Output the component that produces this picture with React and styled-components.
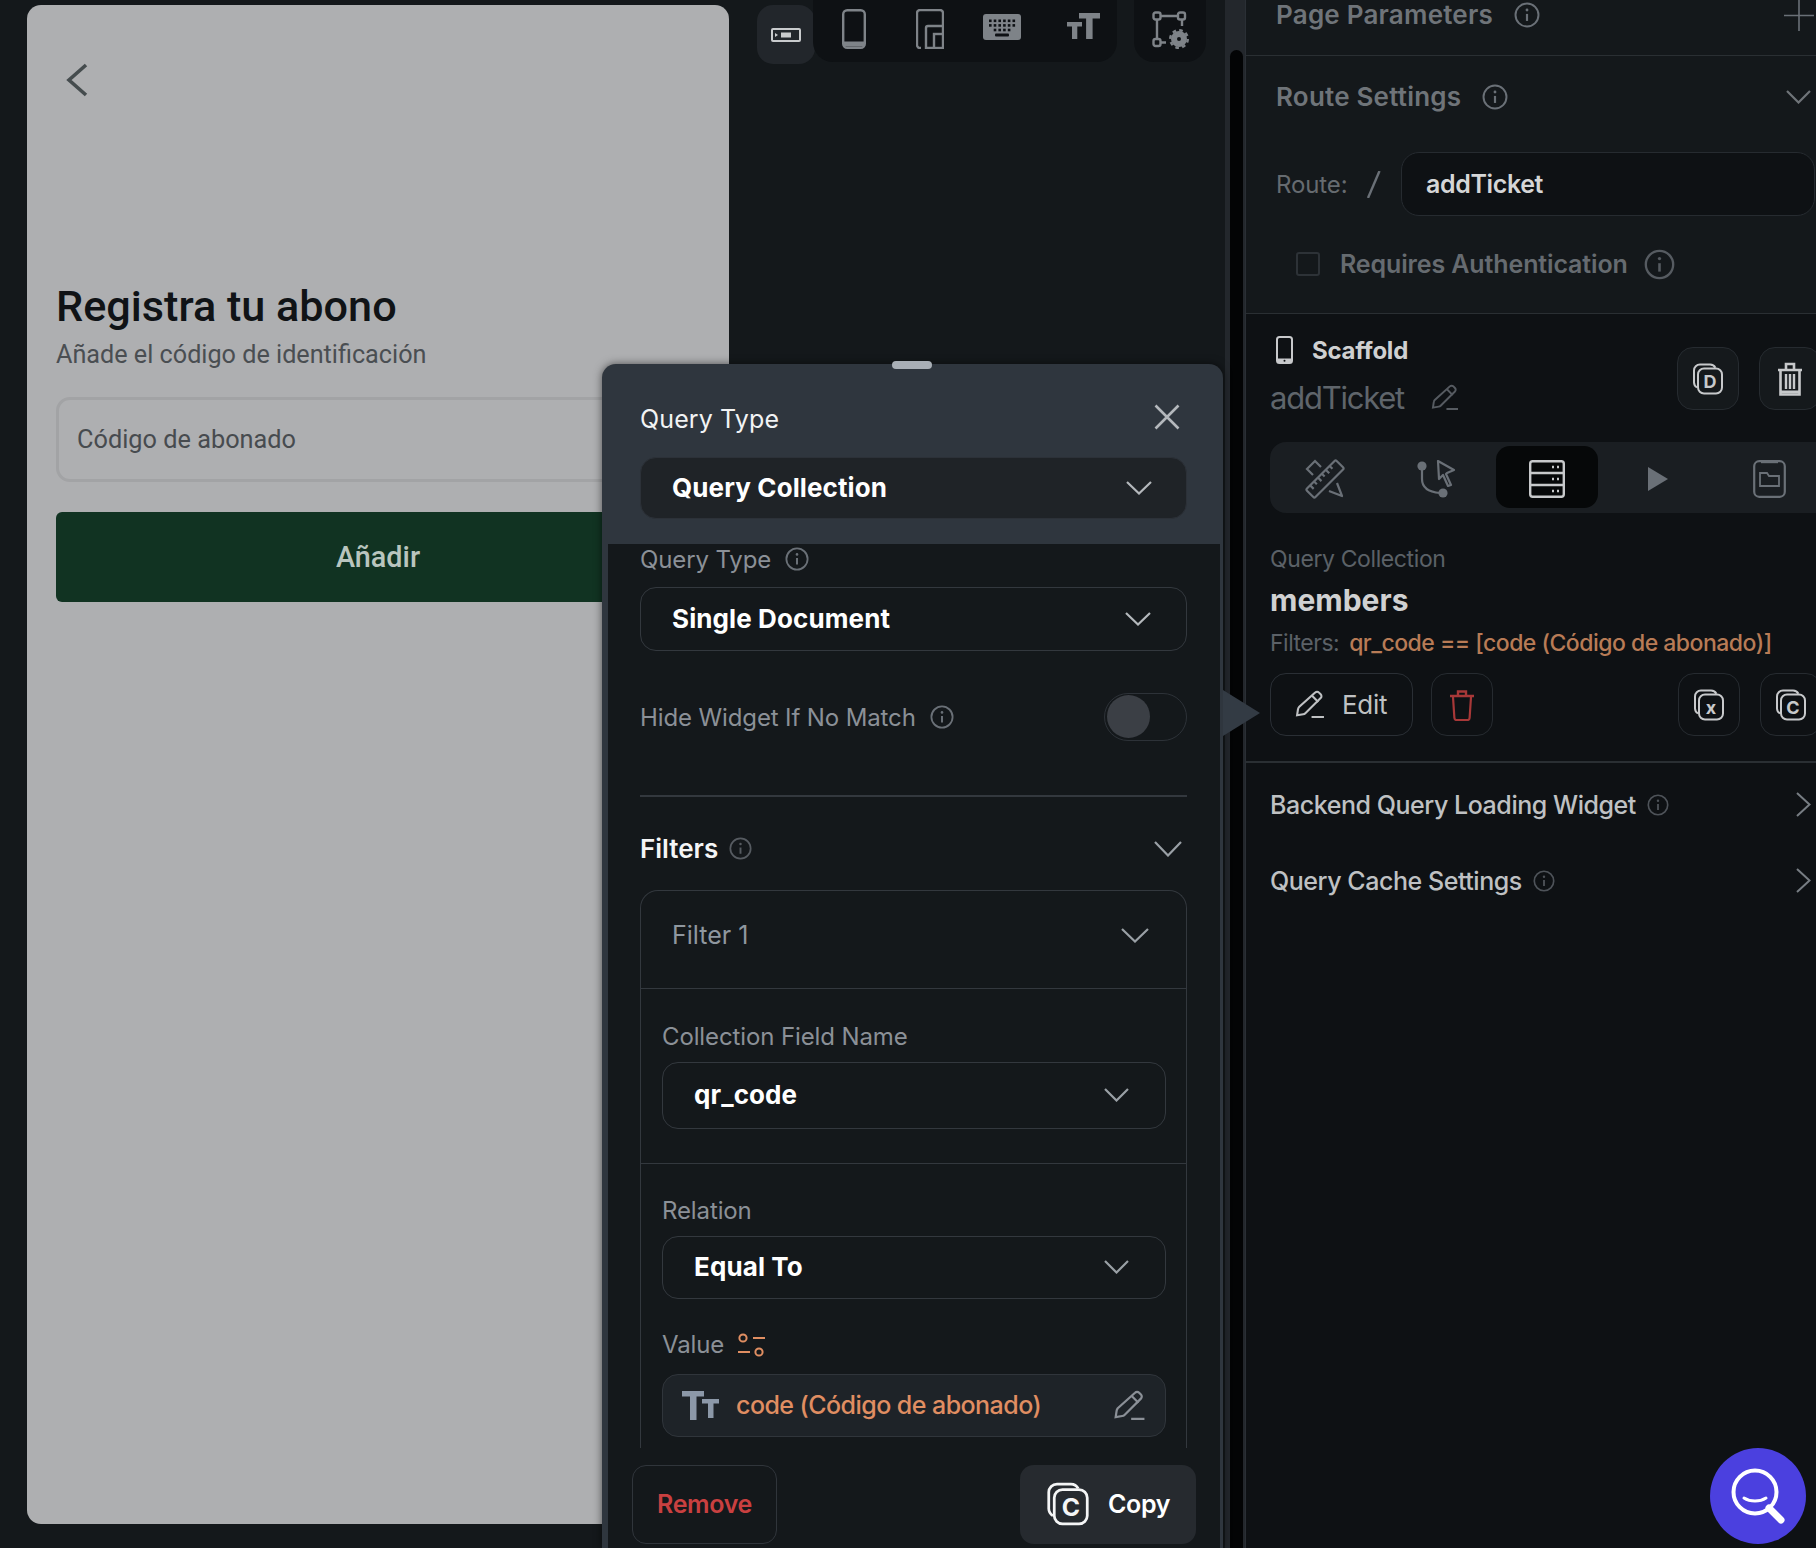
import React from 'react';
import styled, { createGlobalStyle } from 'styled-components';

const GlobalStyle = createGlobalStyle`
  html, body {
    margin: 0;
    width: 1816px;
    height: 1548px;
    overflow: hidden;
    background: #14181b;
    font-family: Inter, "Noto Sans", sans-serif;
  }
  * { box-sizing: border-box; }
`;

const Page = styled.div`
  position: relative;
  display: flex;
  width: 1816px;
  height: 1548px;
  overflow: hidden;
  background: #14181b;
`;

/* ---------- canvas with the phone preview ---------- */
const Canvas = styled.div`
  flex: 0 0 1225px;
  display: flex;
  align-items: flex-start;
  padding: 5px 0 0 27px;
`;

const PhoneCard = styled.div`
  flex: 0 0 702px;
  height: 1519px;
  border-radius: 14px;
  background: #aeafb1;
  padding: 58px 29px 0;
  font-family: Roboto, sans-serif;
  display: flex;
  flex-direction: column;
`;

const BackIcon = styled.svg`
  width: 22px;
  height: 34px;
  margin-left: 10px;
`;

const PhoneTitle = styled.div`
  margin-top: 186px;
  font-size: 43.2px;
  line-height: 48px;
  font-weight: 500;
  color: #101316;
`;

const PhoneSub = styled.div`
  margin-top: 7px;
  font-size: 25.2px;
  line-height: 34px;
  color: #4a4e52;
`;

const PhoneInput = styled.div`
  margin-top: 25px;
  height: 85px;
  border: 3.5px solid #a2a3a5;
  border-radius: 14px;
  padding-left: 18px;
  display: flex;
  align-items: center;
  font-size: 25.3px;
  color: #474b4f;
`;

const PhoneButton = styled.div`
  margin-top: 30px;
  height: 90px;
  border-radius: 6px;
  background: #113322;
  color: #b9c5be;
  font-size: 28.8px;
  font-weight: 500;
  display: flex;
  align-items: center;
  justify-content: center;
`;

const Toolbar = styled.div`
  display: flex;
  align-items: flex-start;
  margin: -5px 0 0 28px;
`;

const ActiveTool = styled.div`
  width: 58px;
  height: 59px;
  margin-top: 5px;
  border-radius: 16px;
  background: #22262b;
  display: flex;
  align-items: center;
  justify-content: center;
`;

const ToolGroup = styled.div`
  width: ${p => p.$width}px;
  height: 62px;
  margin-left: ${p => p.$offset || 0}px;
  padding-left: ${p => p.$pad}px;
  background: #0e1114;
  border-radius: 0 0 20px 20px;
  display: flex;
  align-items: center;
`;

const ToolIcon = styled.svg`
  flex: none;
  margin-left: ${p => p.$gap || 0}px;
  margin-top: ${p => p.$top || 0}px;
`;

const ScrollTrack = styled.div`
  flex: 0 0 20px;
  background: #23272c;
  padding: 50px 2px 0 5px;
`;

const ScrollThumb = styled.div`
  height: 100%;
  background: #030405;
  border-radius: 8px 8px 0 0;
`;

/* ---------- right properties panel ---------- */
const Panel = styled.div`
  flex: 1;
  min-width: 0;
  border-left: 1px solid #2a2f35;
  display: flex;
  flex-direction: column;
  overflow: hidden;
`;

const RouteSection = styled.section`
  padding: 0 1px 33px 30px;
  border-bottom: 1.5px solid #2a2f33;
`;

const ParamsWrap = styled.div`
  margin: 0 -1px 0 -30px;
  padding: 0 2px 25px 30px;
  border-bottom: 1.5px solid #2a2f33;
`;

const HeadRow = styled.div`
  display: flex;
  align-items: center;
  height: 30px;
  margin-top: ${p => p.$top || 0}px;
  padding-right: ${p => p.$right || 0}px;
`;

const DimHeading = styled.div`
  font-size: 26px;
  font-weight: 600;
  letter-spacing: 0.008em;
  line-height: 30px;
  color: #6f7479;
  margin-right: 21px;
`;

const Push = styled.div`
  flex: 1;
`;

const RouteRow = styled.div`
  display: flex;
  align-items: center;
  height: 64px;
  margin-top: 40px;
`;

const RouteLabel = styled.div`
  width: 90px;
  font-size: 24px;
  letter-spacing: -0.005em;
  color: #666b70;
`;

const RouteInput = styled.div`
  flex: 1;
  height: 64px;
  margin-left: 20px;
  padding-left: 24px;
  border: 1.5px solid #262b30;
  border-radius: 18px;
  background: #0e1114;
  color: #d5d6d7;
  font-size: 25px;
  font-weight: 600;
  letter-spacing: -0.015em;
  display: flex;
  align-items: center;
`;

const AuthRow = styled.div`
  display: flex;
  align-items: center;
  height: 32px;
  margin-top: 32px;
  padding-left: 20px;
`;

const Check = styled.div`
  width: 24px;
  height: 24px;
  border: 2px solid #2d3237;
  border-radius: 3px;
  margin-right: 20px;
`;

const AuthLabel = styled(DimHeading)`
  font-size: 25px;
  letter-spacing: -0.005em;
  color: #666b70;
  margin-right: 16px;
`;

const QuerySection = styled.section`
  flex: 1;
  background: #0e1114;
  padding: 22px 0 0 24px;
`;

const ScaffoldHead = styled.div`
  display: flex;
  justify-content: space-between;
  align-items: flex-start;
`;

const ScaffoldRow = styled.div`
  display: flex;
  align-items: center;
  height: 28px;
  padding-left: 6px;
  gap: 19px;
`;

const ScaffoldLabel = styled.div`
  font-size: 24px;
  font-weight: 700;
  letter-spacing: -0.01em;
  color: #cfd0d1;
`;

const NameRow = styled.div`
  display: flex;
  align-items: center;
  gap: 27px;
  height: 38px;
  margin-top: 14px;
`;

const PageName = styled.div`
  font-size: 31px;
  letter-spacing: -0.04em;
  color: #5f656b;
`;

const IconButtons = styled.div`
  display: flex;
  gap: 20px;
  flex: none;
  margin: ${p => p.$top || 0}px -5px 0 0;
`;

const SquareButton = styled.div`
  width: 62px;
  height: 63px;
  border: 1.5px solid #262b30;
  border-radius: 16px;
  background: ${p => p.$fill || 'transparent'};
  display: flex;
  align-items: center;
  justify-content: center;
`;

const TabBar = styled.div`
  display: flex;
  gap: 9px;
  width: 570px;
  height: 71px;
  margin-top: 26px;
  padding: 4px;
  border-radius: 16px;
  background: #1a1e22;
`;

const Tab = styled.div`
  width: 102px;
  height: 62px;
  padding-top: 4px;
  border-radius: 14px;
  background: ${p => (p.$active ? '#060809' : 'transparent')};
  display: flex;
  align-items: center;
  justify-content: center;
`;

const QueryKind = styled.div`
  margin-top: 31px;
  font-size: 23px;
  line-height: 30px;
  letter-spacing: -0.017em;
  color: #5b6167;
`;

const CollectionName = styled.div`
  margin-top: 8px;
  font-size: 30px;
  line-height: 36px;
  font-weight: 700;
  color: #d0d1d2;
`;

const FilterLine = styled.div`
  margin-top: 10px;
  display: flex;
  gap: 10px;
  font-size: 23px;
  line-height: 30px;
  letter-spacing: -0.022em;
  color: #5b6167;
`;

const FilterValue = styled.span`
  font-weight: 500;
  color: #b87b56;
`;

const ActionRow = styled.div`
  margin-top: 15px;
  padding-bottom: 25px;
  display: flex;
  align-items: flex-start;
`;

const EditButton = styled.div`
  width: 143px;
  height: 63px;
  border: 1.5px solid #2a2f35;
  border-radius: 16px;
  padding-left: 24px;
  display: flex;
  align-items: center;
  gap: 17px;
  font-size: 26px;
  letter-spacing: -0.01em;
  color: #bfc1c3;
`;

const DeleteSlot = styled.div`
  margin: 0 auto 0 18px;
`;

const SideButtons = styled(IconButtons)`
  margin-right: -6px;
`;

const QueryRule = styled.div`
  height: 1.5px;
  margin-left: -24px;
  background: #2a2f33;
`;

const Accordions = styled.div`
  margin-top: 4px;
  padding-right: 5px;
`;

const AccordionRow = styled.div`
  display: flex;
  align-items: center;
  height: 76px;
`;

const AccordionLabel = styled.div`
  font-size: 25px;
  font-weight: 500;
  letter-spacing: -0.018em;
  color: #bfc1c3;
  margin-right: 11px;
`;

const SearchFab = styled.div`
  position: absolute;
  left: 1710px;
  top: 1448px;
  width: 96px;
  height: 96px;
  border-radius: 50%;
  background: #4b40df;
  display: flex;
  align-items: center;
  justify-content: center;
`;

/* ---------- query popover over the canvas ---------- */
const Popover = styled.div`
  position: absolute;
  left: 602px;
  top: 364px;
  width: 621px;
  height: 1184px;
  border-radius: 14px 14px 0 0;
  background: #2f363e;
  box-shadow: 0 0 8px rgba(0, 0, 0, 0.55);
  display: flex;
  flex-direction: column;
`;

const Handle = styled.div`
  position: absolute;
  left: 290px;
  top: -3px;
  width: 40px;
  height: 8px;
  border-radius: 4px;
  background: #a9afb6;
`;

const PopArrow = styled.div`
  position: absolute;
  left: 621px;
  top: 326px;
  width: 0;
  height: 0;
  border-top: 23px solid transparent;
  border-bottom: 23px solid transparent;
  border-left: 37px solid #333b44;
`;

const PopHeader = styled.div`
  height: 180px;
  padding: 40px 36px 0 38px;
`;

const TitleRow = styled.div`
  display: flex;
  justify-content: space-between;
  align-items: center;
  height: 30px;
`;

const PopTitle = styled.div`
  font-size: 25px;
  letter-spacing: 0.005em;
  color: #f2f3f4;
`;

const SelectBox = styled.div`
  height: ${p => p.$h}px;
  margin-top: ${p => p.$top}px;
  padding: 0 ${p => p.$right || 28}px 0 ${p => p.$left || 27}px;
  border: 1.5px solid ${p => p.$line || '#33383e'};
  border-radius: 16px;
  background: ${p => p.$fill || 'transparent'};
  display: flex;
  align-items: center;
  justify-content: space-between;
  font-size: 26px;
  font-weight: 700;
  letter-spacing: 0.004em;
  color: #fff;
  line-height: 1;
  padding-bottom: 1px;
`;

const PopBody = styled.div`
  flex: 1;
  min-height: 0;
  margin: 0 3px 0 6px;
  background: #14181b;
  display: flex;
  flex-direction: column;
`;

const ScrollArea = styled.div`
  height: 904px;
  flex: none;
  overflow: hidden;
  padding: 0 33px 0 32px;
`;

const FieldLabel = styled.div`
  display: flex;
  align-items: center;
  gap: 14px;
  height: 30px;
  margin-top: ${p => p.$top || 0}px;
  font-size: 24px;
  letter-spacing: -0.005em;
  color: #8b9097;
`;

const ToggleRow = styled.div`
  display: flex;
  align-items: center;
  justify-content: space-between;
  height: 48px;
  margin-top: 42px;
`;

const Toggle = styled.div`
  width: 83px;
  height: 48px;
  padding: 1px 2px;
  border: 1.5px solid #2d3238;
  border-radius: 24px;
`;

const Knob = styled.div`
  width: 43px;
  height: 43px;
  border-radius: 50%;
  background: #3b3f45;
`;

const Rule = styled.div`
  height: 1.5px;
  margin-top: 54px;
  background: #33383e;
`;

const FiltersRow = styled.div`
  display: flex;
  align-items: center;
  height: 32px;
  margin-top: 36px;
  padding-right: 5px;
`;

const FiltersLabel = styled.div`
  font-size: 26px;
  font-weight: 600;
  color: #f4f5f6;
  margin-right: 11px;
`;

const FilterBox = styled.div`
  margin-top: 25px;
  border: 1.5px solid #33383e;
  border-bottom: none;
  border-radius: 18px 18px 0 0;
  height: 700px;
`;

const FilterHead = styled.div`
  height: 98px;
  padding: 0 37px 8px 31px;
  border-bottom: 1.5px solid #33383e;
  display: flex;
  align-items: center;
  justify-content: space-between;
  font-size: 25px;
  color: #8f979f;
`;

const FilterGroup = styled.div`
  padding: 0 20px ${p => p.$bottom || 0}px 21px;
  border-bottom: ${p => (p.$rule ? '1.5px solid #33383e' : 'none')};
`;

const ValueField = styled.div`
  height: 63px;
  margin-top: 14px;
  padding: 0 19px;
  border: 1.5px solid #30353b;
  border-radius: 16px;
  background: #1e2328;
  display: flex;
  align-items: center;
  font-size: 25px;
  font-weight: 500;
  letter-spacing: -0.022em;
  color: #e08e62;
`;

const ValueText = styled.div`
  flex: 1;
  margin-left: 17px;
`;

const PopFooter = styled.div`
  margin-top: 17px;
  padding: 0 24px;
  display: flex;
  justify-content: space-between;
`;

const RemoveButton = styled.div`
  width: 145px;
  height: 79px;
  padding-bottom: 2px;
  border: 1.5px solid #30353b;
  border-radius: 14px;
  display: flex;
  align-items: center;
  justify-content: center;
  font-size: 25px;
  font-weight: 600;
  letter-spacing: -0.015em;
  color: #c94040;
`;

const CopyButton = styled.div`
  width: 176px;
  height: 79px;
  border-radius: 14px;
  background: #262a2f;
  padding: 0 0 2px 26px;
  display: flex;
  align-items: center;
  gap: 18px;
  font-size: 25px;
  font-weight: 600;
  letter-spacing: -0.015em;
  color: #fff;
`;

/* ---------- drawn icons ---------- */
const Info = ({ size = 24, color = '#6a7077' }) => (
  <svg width={size} height={size} viewBox="0 0 24 24" fill="none" style={{ flex: 'none' }}>
    <circle cx="12" cy="12" r="10.6" stroke={color} strokeWidth="1.8" />
    <path d="M12 11v6.5" stroke={color} strokeWidth="2" />
    <circle cx="12" cy="7.4" r="1.3" fill={color} />
  </svg>
);

const Chevron = ({ w = 26, h = 14, color = '#9aa0a6', width = 2.2 }) => (
  <svg width={w} height={h} viewBox={`0 0 ${w} ${h}`} fill="none" style={{ flex: 'none' }}>
    <path d={`M1 1L${w / 2} ${h - 1.5}L${w - 1} 1`} stroke={color} strokeWidth={width} />
  </svg>
);

const ChevronRight = () => (
  <svg width="15" height="25" viewBox="0 0 15 25" fill="none" style={{ flex: 'none' }}>
    <path d="M1 1L13.5 12.5L1 24" stroke="#777d83" strokeWidth="2" />
  </svg>
);

const Pencil = ({ w = 29, h = 28, color = '#777d83' }) => (
  <svg width={w} height={h} viewBox="0 0 29 28" fill="none" style={{ flex: 'none' }}>
    <path d="M19.5 2.5a2.6 2.6 0 0 1 3.7 0l1.6 1.6a2.6 2.6 0 0 1 0 3.7L10 22.5c-.6.6-1.3.9-2.1 1L2 24.5l.9-5.9c.1-.8.5-1.5 1-2.1L19.5 2.5Z" stroke={color} strokeWidth="2" />
    <path d="M16.5 5.5l6 6M16 26h12" stroke={color} strokeWidth="2" />
  </svg>
);

const StackedLetter = ({ letter, color = '#c7c9cb', size = 32 }) => (
  <svg width={size} height={size} viewBox="0 0 32 32" fill="none" style={{ flex: 'none' }}>
    <path d="M5 24.5A6 6 0 0 1 2 19.5V7.5A6 6 0 0 1 8 1.5h10a6 6 0 0 1 5.4 3.2" stroke={color} strokeWidth="2" />
    <rect x="6" y="5.5" width="24" height="25" rx="6" stroke={color} strokeWidth="2" fill="none" />
    <text x="18" y="24.5" textAnchor="middle" fontSize="18" fontWeight="700" fontFamily="Inter, sans-serif" fill={color}>{letter}</text>
  </svg>
);

const Trash = ({ color = '#c7c9cb', w = 26, h = 32 }) => (
  <svg width={w} height={h} viewBox="0 0 26 32" fill="none">
    <path d="M1 7h24M9 7V2.5h8V7" stroke={color} strokeWidth="2.4" />
    <path d="M4 8l1.4 21c.1 1.2.8 2 2 2h11.2c1.2 0 1.9-.8 2-2L22 8" stroke={color} strokeWidth="2.2" />
  </svg>
);

const SolidTrash = () => (
  <svg width="26" height="34" viewBox="0 0 26 34" fill="none">
    <path d="M1 8h24M9 7V2h8v5" stroke="#c7c9cb" strokeWidth="2.6" />
    <path d="M3.5 9v23.5h19V9" stroke="#c7c9cb" strokeWidth="2.6" />
    <path d="M9 12v15M13 12v15M17 12v15" stroke="#c7c9cb" strokeWidth="2.4" />
    <path d="M4 30h18" stroke="#c7c9cb" strokeWidth="3" />
  </svg>
);

const BigT = ({ color }) => (
  <>
    <path d="M12 0h21v5.5h-7.4V26h-6.5V5.5H12Z" fill={color} />
    <path d="M0 9h15v4.6h-4.7V26H5V13.6H0Z" fill={color} />
  </>
);

const App = () => (
  <Page>
    <GlobalStyle />
    <Canvas>
      <PhoneCard>
        <BackIcon viewBox="0 0 22 34" fill="none">
          <path d="M20 2L3 17L20 32" stroke="#454c4e" strokeWidth="3.6" />
        </BackIcon>
        <PhoneTitle>Registra tu abono</PhoneTitle>
        <PhoneSub>Añade el código de identificación</PhoneSub>
        <PhoneInput>Código de abonado</PhoneInput>
        <PhoneButton>Añadir</PhoneButton>
      </PhoneCard>
      <Toolbar>
        <ActiveTool>
          <svg width="30" height="14" viewBox="0 0 30 14" fill="none">
            <rect x="1" y="1" width="28" height="12" rx="1" stroke="#c9cbcd" strokeWidth="2" />
            <rect x="10" y="4.5" width="10" height="5" fill="#c9cbcd" />
            <path d="M4 5l3 2-3 2Z" fill="#c9cbcd" />
          </svg>
        </ActiveTool>
        <ToolGroup $width={304} $pad={29} $offset={-2}>
          <ToolIcon width="24" height="40" viewBox="0 0 24 40" fill="none" $top={-4}>
            <rect x="1.2" y="1.2" width="21.6" height="37.6" rx="4" stroke="#7e8388" strokeWidth="2.4" />
            <path d="M2 35h20" stroke="#7e8388" strokeWidth="5" />
          </ToolIcon>
          <ToolIcon width="28" height="40" viewBox="0 0 28 40" fill="none" $gap={50} $top={-4}>
            <path d="M5 39H4a3 3 0 0 1-3-3V4a3 3 0 0 1 3-3h20a3 3 0 0 1 3 3v13" stroke="#7e8388" strokeWidth="2.4" />
            <path d="M10 39v-20a2 2 0 0 1 2-2h14a1 1 0 0 1 1 1v19a2 2 0 0 1-2 2Z" stroke="#7e8388" strokeWidth="2.4" />
            <rect x="18" y="25" width="9" height="14" fill="#0e1114" stroke="#7e8388" strokeWidth="2.4" />
          </ToolIcon>
          <ToolIcon width="38" height="26" viewBox="0 0 38 26" $gap={39} $top={-8}>
            <rect width="38" height="26" rx="3" fill="#7e8388" />
            {[0, 1, 2].map(r =>
              [0, 1, 2, 3, 4, 5].map(c => (
                <rect key={`${r}-${c}`} x={6 + c * 4.7} y={5.5 + r * 4.6} width="2.6" height="2.6" fill="#0e1114" opacity={r === 2 && (c === 0 || c === 5) ? 0 : 1} />
              ))
            )}
            <rect x="12" y="19.5" width="14" height="3" rx="1" fill="#0e1114" />
          </ToolIcon>
          <ToolIcon width="33" height="26" viewBox="0 0 33 26" $gap={46} $top={-10}>
            <BigT color="#7e8388" />
          </ToolIcon>
        </ToolGroup>
        <ToolGroup $width={72} $pad={18} $offset={17}>
          <ToolIcon width="37" height="38" viewBox="0 0 37 38" fill="none" $top={-2}>
            <rect x="1.5" y="1.5" width="7" height="7" rx="2" stroke="#7e8388" strokeWidth="2.4" />
            <rect x="26" y="1.5" width="7" height="7" rx="2" stroke="#7e8388" strokeWidth="2.4" />
            <rect x="1.5" y="28" width="7" height="7" rx="2" stroke="#7e8388" strokeWidth="2.4" />
            <path d="M9 5h17M5 9v19M30 9v6M9 31.5h5" stroke="#7e8388" strokeWidth="2.4" />
            <circle cx="27" cy="28" r="5" stroke="#7e8388" strokeWidth="6" />
            <circle cx="27" cy="28" r="8.8" stroke="#7e8388" strokeWidth="2.4" strokeDasharray="3.6 3.3" />
          </ToolIcon>
        </ToolGroup>
      </Toolbar>
    </Canvas>

    <ScrollTrack>
      <ScrollThumb />
    </ScrollTrack>

    <Panel>
      <RouteSection>
        <ParamsWrap>
          <HeadRow>
            <DimHeading>Page Parameters</DimHeading>
            <Info size={26} />
            <Push />
            <svg width="30" height="31" viewBox="0 0 30 31" fill="none">
              <path d="M15 0v31M0 15.5h30" stroke="#6a7077" strokeWidth="1.6" />
            </svg>
          </HeadRow>
        </ParamsWrap>
        <HeadRow $top={26} $right={4}>
          <DimHeading>Route Settings</DimHeading>
          <Info size={26} />
          <Push />
          <Chevron w={25} h={14} color="#6f7479" />
        </HeadRow>
        <RouteRow>
          <RouteLabel>Route:</RouteLabel>
          <svg width="15" height="27" viewBox="0 0 15 27" fill="none" style={{ flex: 'none' }}>
            <path d="M13.5 0L2 27" stroke="#6a7077" strokeWidth="2.4" />
          </svg>
          <RouteInput>addTicket</RouteInput>
        </RouteRow>
        <AuthRow>
          <Check />
          <AuthLabel>Requires Authentication</AuthLabel>
          <Info size={31} color="#565b61" />
        </AuthRow>
      </RouteSection>

      <QuerySection>
        <ScaffoldHead>
          <div>
            <ScaffoldRow>
              <svg width="17" height="28" viewBox="0 0 17 28" fill="none" style={{ flex: 'none' }}>
                <rect x="1" y="1" width="15" height="26" rx="2.5" stroke="#c7c9cb" strokeWidth="2" />
                <path d="M1 22.5h15V25a2 2 0 0 1-2 2H3a2 2 0 0 1-2-2Z" fill="#c7c9cb" />
                <circle cx="8.5" cy="24.7" r="1" fill="#0e1114" />
              </svg>
              <ScaffoldLabel>Scaffold</ScaffoldLabel>
            </ScaffoldRow>
            <NameRow>
              <PageName>addTicket</PageName>
              <Pencil w={28} h={27} color="#565b61" />
            </NameRow>
          </div>
          <IconButtons $top={11}>
            <SquareButton $fill="#15191c"><StackedLetter letter="D" /></SquareButton>
            <SquareButton $fill="#15191c"><SolidTrash /></SquareButton>
          </IconButtons>
        </ScaffoldHead>

        <TabBar>
          <Tab>
            <svg width="40" height="40" viewBox="0 0 40 40" fill="none" stroke="#6a7077" strokeWidth="2.2">
              <g transform="rotate(-45 20 20)">
                <rect x="-1" y="14" width="42" height="12" rx="1.5" />
                <path d="M5 14v5M10.500 14v4M16 14v5M21.500 14v4M27 14v5M32.500 14v4" />
              </g>
              <path d="M8 16L2 10l8-8 6 6" />
              <path d="M24 32l13 5-5-13" strokeLinejoin="round" />
            </svg>
          </Tab>
          <Tab>
            <svg width="39" height="38" viewBox="0 0 39 38" fill="none">
              <circle cx="5" cy="6" r="4.6" fill="#6a7077" />
              <circle cx="26" cy="33" r="4.6" fill="#6a7077" />
              <path d="M5 8v11c0 8 6 13 18 14" stroke="#6a7077" strokeWidth="2.2" />
              <path d="M21 1l16 9-7 3-1 1 5 11-3 1-5-11-4 4Z" stroke="#6a7077" strokeWidth="2.2" strokeLinejoin="round" />
            </svg>
          </Tab>
          <Tab $active>
            <svg width="36" height="38" viewBox="0 0 36 38" fill="none">
              <rect x="1.2" y="1.2" width="33.6" height="35.6" rx="2.5" stroke="#c7c9cb" strokeWidth="2.4" />
              <path d="M1 13h34M1 25h34" stroke="#c7c9cb" strokeWidth="2.4" />
              <path d="M23 7h2M28 7h2M23 19h2M28 19h2M23 31h2M28 31h2" stroke="#c7c9cb" strokeWidth="2.6" />
            </svg>
          </Tab>
          <Tab>
            <svg width="20" height="24" viewBox="0 0 20 24">
              <path d="M0 0L20 12L0 24Z" fill="#6a7077" />
            </svg>
          </Tab>
          <Tab>
            <svg width="33" height="38" viewBox="0 0 33 38" fill="none">
              <rect x="1.2" y="1.2" width="30.6" height="35.6" rx="5" stroke="#6a7077" strokeWidth="2.2" />
              <path d="M8 1.5h17" stroke="#6a7077" strokeWidth="3.4" />
              <path d="M7 13h7l2 3h10v10H7Z" stroke="#6a7077" strokeWidth="1.8" />
            </svg>
          </Tab>
        </TabBar>

        <QueryKind>Query Collection</QueryKind>
        <CollectionName>members</CollectionName>
        <FilterLine>
          Filters:
          <FilterValue>qr_code == [code (Código de abonado)]</FilterValue>
        </FilterLine>

        <ActionRow>
          <EditButton>
            <Pencil w={30} h={29} color="#bfc1c3" />
            Edit
          </EditButton>
          <DeleteSlot>
            <SquareButton><Trash color="#a83838" /></SquareButton>
          </DeleteSlot>
          <SideButtons>
            <SquareButton><StackedLetter letter="x" /></SquareButton>
            <SquareButton><StackedLetter letter="C" /></SquareButton>
          </SideButtons>
        </ActionRow>
        <QueryRule />

        <Accordions>
          <AccordionRow>
            <AccordionLabel>Backend Query Loading Widget</AccordionLabel>
            <Info size={22} color="#4e5359" />
            <Push />
            <ChevronRight />
          </AccordionRow>
          <AccordionRow>
            <AccordionLabel>Query Cache Settings</AccordionLabel>
            <Info size={22} color="#4e5359" />
            <Push />
            <ChevronRight />
          </AccordionRow>
        </Accordions>
      </QuerySection>
    </Panel>

    <Popover>
      <Handle />
      <PopArrow />
      <PopHeader>
        <TitleRow>
          <PopTitle>Query Type</PopTitle>
          <svg width="26" height="26" viewBox="0 0 26 26" fill="none" style={{ marginRight: 7, marginTop: -4 }}>
            <path d="M1.5 1.5l23 23M24.5 1.5l-23 23" stroke="#b4b8bc" strokeWidth="2.6" />
          </svg>
        </TitleRow>
        <SelectBox $h={62} $top={23} $fill="#1f2327" $line="#2c3138" $left={31} $right={34}>
          Query Collection
          <Chevron color="#b4b8bc" />
        </SelectBox>
      </PopHeader>

      <PopBody>
        <ScrollArea>
          <FieldLabel>
            Query Type
            <Info color="#6a7077" />
          </FieldLabel>
          <SelectBox $h={64} $top={13} $left={31} $right={35}>
            Single Document
            <Chevron color="#b4b8bc" />
          </SelectBox>
          <ToggleRow>
            <FieldLabel>
              Hide Widget If No Match
              <Info color="#6a7077" />
            </FieldLabel>
            <Toggle><Knob /></Toggle>
          </ToggleRow>
          <Rule />
          <FiltersRow>
            <FiltersLabel>Filters</FiltersLabel>
            <Info size={23} color="#565b61" />
            <Push />
            <Chevron w={28} h={16} color="#9aa0a6" />
          </FiltersRow>
          <FilterBox>
            <FilterHead>
              Filter 1
              <Chevron w={28} h={15} color="#9aa0a6" />
            </FilterHead>
            <FilterGroup $rule $bottom={34}>
              <FieldLabel $top={33}>Collection Field Name</FieldLabel>
              <SelectBox $h={67} $top={10} $left={31} $right={36}>
                qr_code
                <Chevron w={25} color="#9aa0a6" />
              </SelectBox>
            </FilterGroup>
            <FilterGroup>
              <FieldLabel $top={32}>Relation</FieldLabel>
              <SelectBox $h={63} $top={10} $left={31} $right={36}>
                Equal To
                <Chevron w={25} color="#9aa0a6" />
              </SelectBox>
              <FieldLabel $top={31}>
                Value
                <svg width="27" height="24" viewBox="0 0 27 24" fill="none">
                  <circle cx="5" cy="5" r="3.6" stroke="#e08e62" strokeWidth="2" />
                  <circle cx="21" cy="19" r="3.6" stroke="#e08e62" strokeWidth="2" />
                  <path d="M15 5h12M0 19h12" stroke="#e08e62" strokeWidth="2" />
                </svg>
              </FieldLabel>
              <ValueField>
                <svg width="37" height="29" viewBox="0 0 37 29" style={{ flex: 'none' }}>
                  <path d="M0 0h22v5.5h-7.5V29H8V5.5H0Z" fill="#8c98a8" />
                  <path d="M20 8h17v4.5h-5.500V27H26V12.500h-6Z" fill="#8c98a8" />
                </svg>
                <ValueText>code (Código de abonado)</ValueText>
                <Pencil w={33} h={31} color="#8b9097" />
              </ValueField>
            </FilterGroup>
          </FilterBox>
        </ScrollArea>

        <PopFooter>
          <RemoveButton>Remove</RemoveButton>
          <CopyButton>
            <StackedLetter letter="C" color="#f4f5f6" size={44} />
            Copy
          </CopyButton>
        </PopFooter>
      </PopBody>
    </Popover>

    <SearchFab>
      <svg width="56" height="58" viewBox="0 0 56 58" fill="none">
        <circle cx="25" cy="25" r="21.5" stroke="#fff" strokeWidth="4" />
        <path d="M14 31c6 4 16 4 22 0" stroke="#fff" strokeWidth="3" strokeLinecap="round" />
        <path d="M39 41l12 12" stroke="#fff" strokeWidth="7" strokeLinecap="round" />
      </svg>
    </SearchFab>
  </Page>
);

export default App;
